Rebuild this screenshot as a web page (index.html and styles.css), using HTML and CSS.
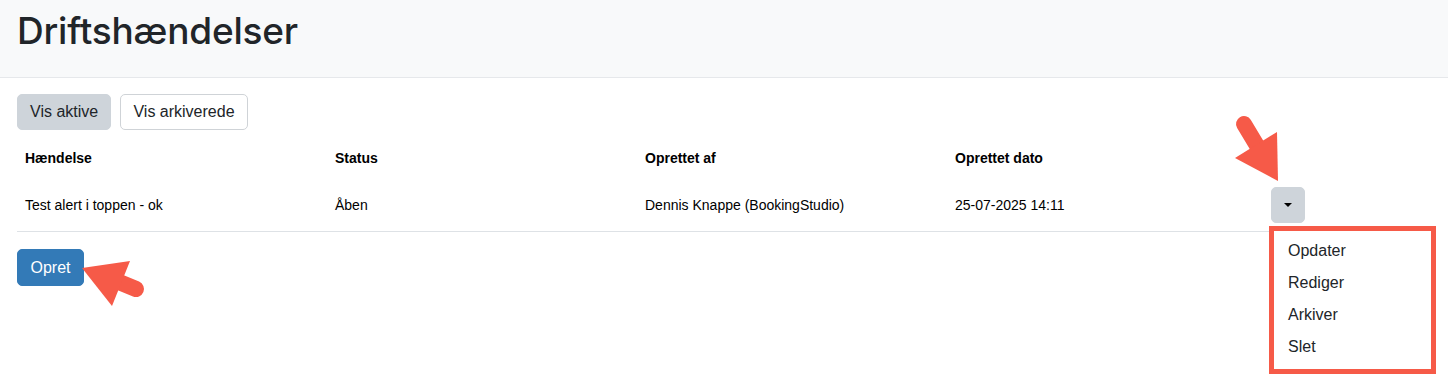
FILE: index.html
```html
<!DOCTYPE html>
<html lang="da">
<head>
    <meta charset="UTF-8">
    <meta name="viewport" content="width=device-width, initial-scale=1.0">
    <title>Driftshændelser</title>
    <link rel="stylesheet" href="styles.css">
</head>
<body>
    <div class="page-header">
        <h1>Driftshændelser</h1>
    </div>

    <div class="content">
        <div class="filter-buttons">
            <button class="btn btn-active">Vis aktive</button>
            <button class="btn btn-outline">Vis arkiverede</button>
        </div>

        <table class="incident-table">
            <thead>
                <tr>
                    <th class="col">Hændelse</th>
                    <th class="col">Status</th>
                    <th class="col">Oprettet af</th>
                    <th class="col">Oprettet dato</th>
                    <th></th>
                </tr>
            </thead>
            <tbody>
                <tr>
                    <td>Test alert i toppen - ok</td>
                    <td>Åben</td>
                    <td>Dennis Knappe (BookingStudio)</td>
                    <td>25-07-2025 14:11</td>
                    <td class="actions">
                        <div class="dropdown">
                            <button class="btn btn-toggle"><span class="caret"></span></button>
                            <ul class="dropdown-menu">
                                <li>Opdater</li>
                                <li>Rediger</li>
                                <li>Arkiver</li>
                                <li>Slet</li>
                            </ul>
                        </div>
                    </td>
                </tr>
            </tbody>
        </table>

        <button class="btn btn-primary">Opret</button>
    </div>

    <!-- annotation arrows -->
    <svg class="annotations" width="1448" height="383" viewBox="0 0 1448 383">
        <g fill="#f65a48" stroke="#f65a48">
            <line x1="1244" y1="124" x2="1259" y2="149" stroke-width="16" stroke-linecap="round"/>
            <polygon points="1278,181 1235,158 1277,132" stroke="none"/>
            <line x1="136" y1="289" x2="119" y2="282" stroke-width="16" stroke-linecap="round"/>
            <polygon points="82,268 130,261 112,306" stroke="none"/>
        </g>
    </svg>
</body>
</html>
```

FILE: styles.css
```css
* {
    box-sizing: border-box;
}
body {
    margin: 0;
    min-height: 383px;
    font-family: "Helvetica Neue", Helvetica, "Liberation Sans", Arial, sans-serif;
    color: #212529;
    background: white;
}
.page-header {
    background: #f8f9fa;
    border-bottom: 1px solid #e6e8eb;
    height: 78px;
    padding: 0 17px;
}
.page-header h1 {
    margin: 0;
    padding-top: 7px;
    font-family: Inter, "Liberation Sans", Arial, sans-serif;
    font-size: 37px;
    font-weight: 500;
    letter-spacing: -0.2px;
    line-height: 48px;
}
.content {
    padding: 16px 17px 0 17px;
}
.filter-buttons {
    display: flex;
    gap: 9px;
}
.btn {
    font-family: inherit;
    font-size: 16px;
    line-height: 22px;
    padding: 6px 12px;
    border-radius: 5px;
    border: 1px solid transparent;
    color: #212529;
    cursor: pointer;
    white-space: nowrap;
}
.btn-active {
    background: #ced4da;
    border-color: #ced4da;
    width: 94px;
    height: 36px;
}
.btn-outline {
    background: white;
    border-color: #cfd3d7;
    width: 128px;
    height: 36px;
}
.incident-table {
    margin-top: 8px;
    width: 100%;
    border-collapse: collapse;
    font-size: 14px;
    color: #000;
}
.incident-table th {
    text-align: left;
    font-weight: 700;
    padding: 8px 8px 9px 8px;
    line-height: 24px;
}
.incident-table .col {
    width: 310px;
}
.incident-table td {
    padding: 8px;
    line-height: 20px;
    vertical-align: middle;
    border-bottom: 1px solid #dee2e6;
}
.incident-table td.actions {
    padding-left: 14px;
}
.dropdown {
    position: relative;
    width: 34px;
}
.btn-toggle {
    display: flex;
    align-items: center;
    justify-content: center;
    width: 34px;
    height: 36px;
    padding: 0;
    background: #ced4da;
    border-color: #ced4da;
}
.caret {
    width: 0;
    height: 0;
    border-left: 4px solid transparent;
    border-right: 4px solid transparent;
    border-top: 4px solid #000;
}
.dropdown-menu {
    position: absolute;
    top: 39px;
    left: -2px;
    width: 167px;
    margin: 0;
    padding: 4px 0 6px 0;
    list-style: none;
    background: white;
    border: 5px solid #f65a48;
    font-size: 16px;
    color: #212529;
    z-index: 2;
}
.dropdown-menu li {
    padding: 4px 14px;
    line-height: 24px;
}
.btn-primary {
    margin-top: 17px;
    background: #337ab7;
    border-color: #337ab7;
    color: white;
    width: 67px;
    height: 37px;
    padding: 6px 12px;
}
.annotations {
    position: absolute;
    top: 0;
    left: 0;
    pointer-events: none;
    z-index: 3;
}
```
